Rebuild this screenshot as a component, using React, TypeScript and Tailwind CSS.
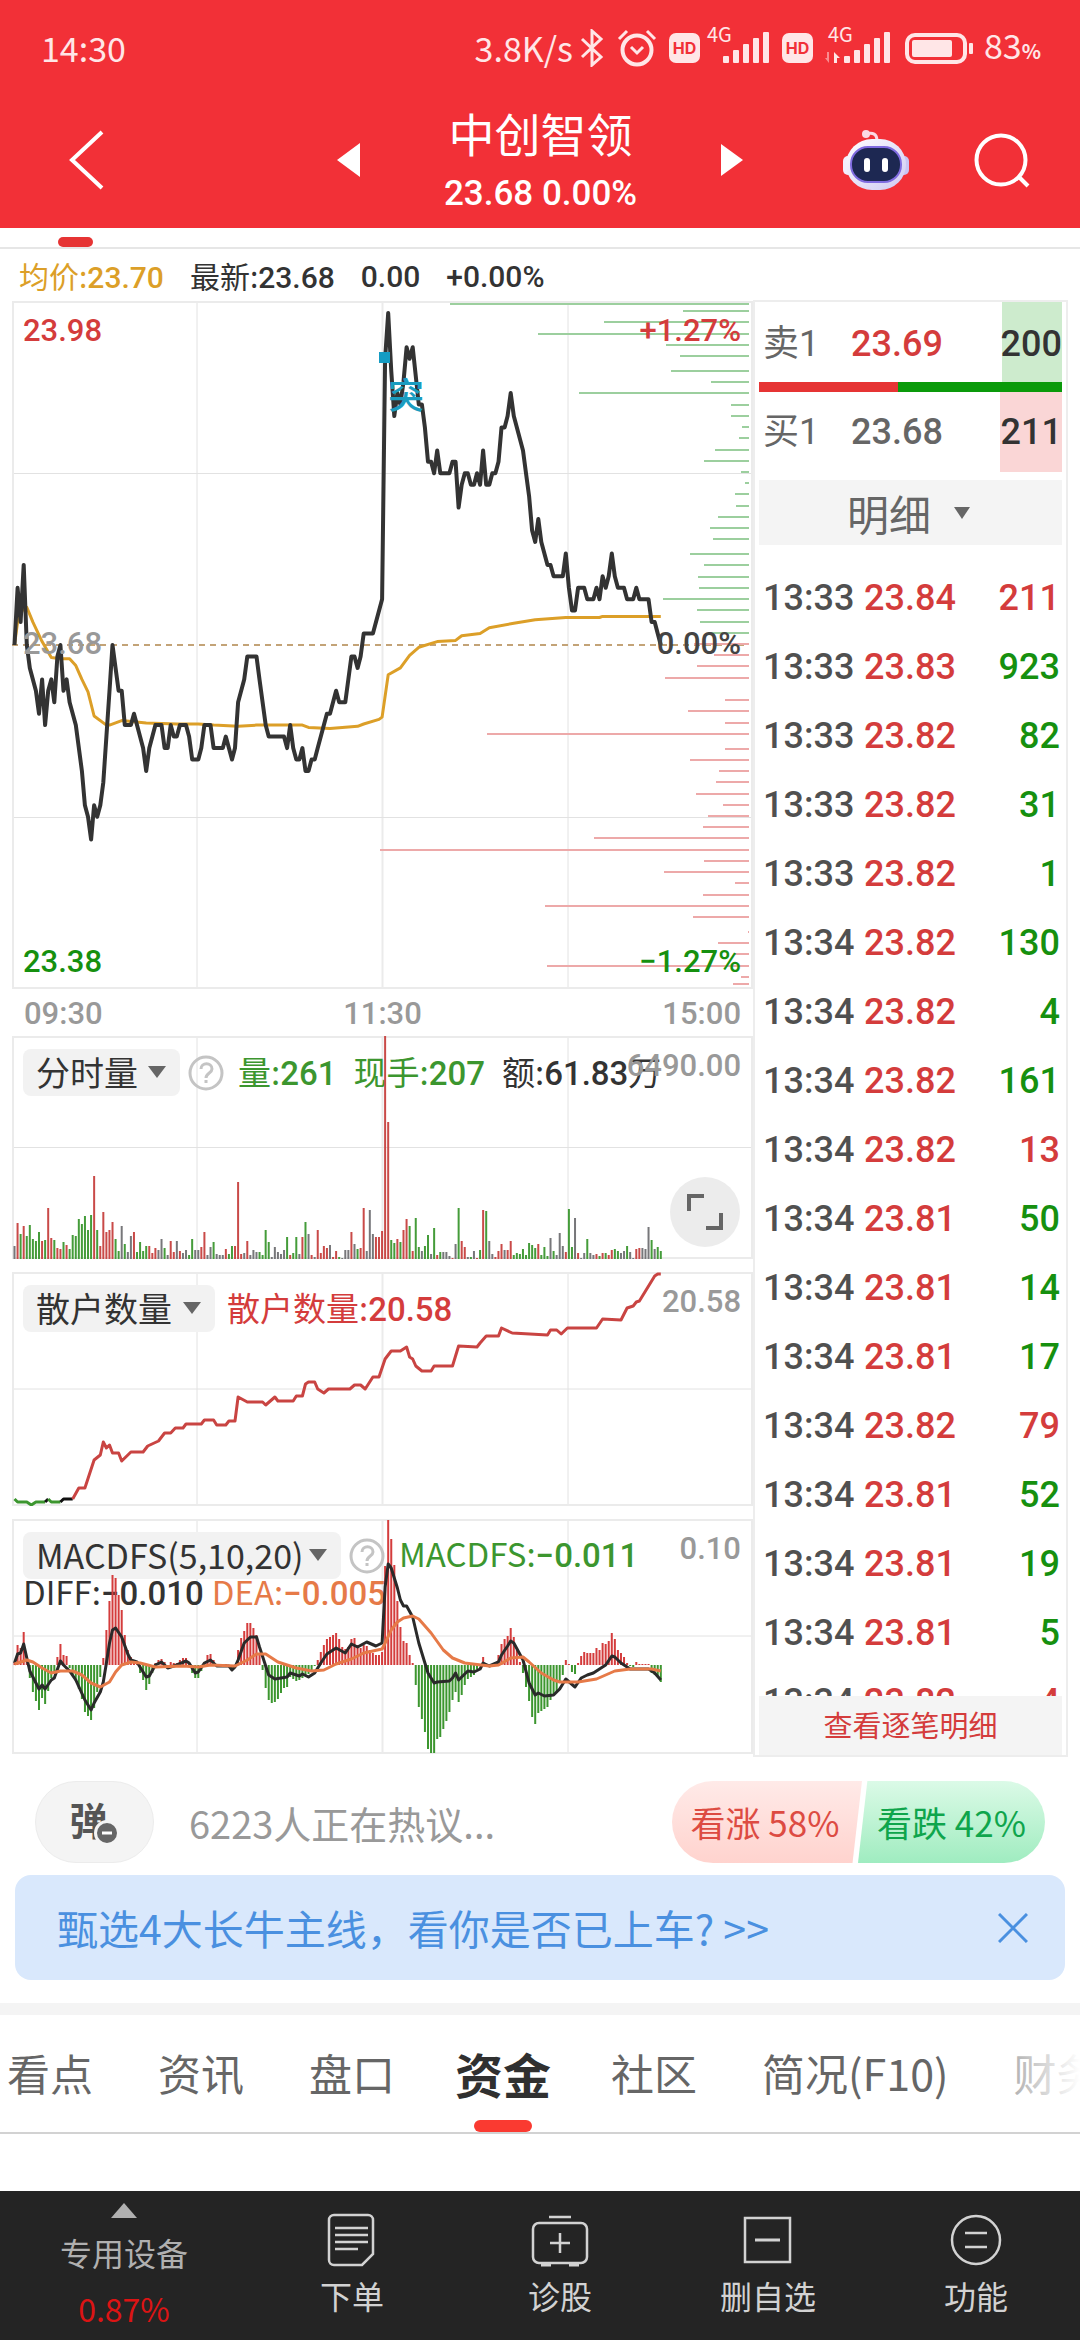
import React from 'react';

type Point = [number, number];

// One slot per trading minute, 240 minutes across the panel
const PANEL_WIDTH = 741;
const minuteX = (minute: number) => 2.5 + minute * 3.063;

const RED = '#d43c3c';
const GREEN = '#3c962f';
const barColors: Record<string, string> = { r: '#c94a48', g: '#459c3a', k: '#77777a' };

const parsePoints = (text: string): Point[] =>
  text.split(' ').map((pair) => pair.split(',').map(Number) as Point);

const toPath = (points: Point[], toY: (value: number) => number = (v) => v) =>
  points.map(([m, v]) => `${minuteX(m).toFixed(1)},${toY(v).toFixed(1)}`).join(' ');

// minute, ticks of 0.01 above yesterday's close
const pricePoints = parsePoints(
  '0,0 1,5 2,2 3,7 4,0 5,-2 7,-4 8,-6 9,-3 10,-7 11,-4 12,-3 13,-5 14,-1 15,0 16,-4 17,-3 18,-5 20,-7 22,-11 23,-14 24,-15 25,-17 26,-14 27,-15 28,-14 29,-12 30,-8 31,-4 32,0 34,-4 35,-4 36,-7 38,-7 39,-6 40,-7 42,-9 43,-11 44,-9 46,-7 48,-7 49,-9 50,-9 51,-7 52,-8 53,-8 54,-7 56,-7 57,-8 58,-10 60,-10 61,-9 62,-7 64,-7 65,-9 68,-9 69,-8 70,-9 71,-10 72,-9 73,-5 75,-3 76,-1 79,-1 80,-3 82,-7 83,-8 88,-8 89,-9 90,-7 91,-9 92,-10 93,-10 94,-9 95,-11 96,-11 97,-10 98,-10 99,-9 102,-6 103,-6 105,-4 106,-5 108,-5 110,-1 111,-1 112,-2 113,-1 114,1 117,1 120,4 121,25 122,29 123,24 124,20 125,22 126,21 127,23 128,26 129,25 130,26 132,21 133,21 134,19 135,16 136,16 137,15 138,17 139,15 142,15 143,16 144,16 145,12 146,14 147,15 148,15 149,14 150,14 151,15 152,14 153,17 154,14 155,14 156,15 157,15 158,16 159,19 160,19 161,20 162,22 163,20 166,17 167,15 168,13 169,10 170,9 171,11 172,9 174,7 175,7 176,6 179,6 180,8 181,5 182,3 183,3 184,5 186,5 187,4 189,4 190,5 191,4 192,6 193,5 194,6 195,8 196,6 197,5 199,5 200,4 202,4 203,5 204,4 207,4 208,2 209,2 210,1 211,0',
);

const averagePoints = parsePoints(
  '0,0 1,2 3,3.3 4,3.3 6,2 9,0.3 12,-1.1 15,-1.2 18,-1.2 20,-1.8 22,-3 24,-4.1 26,-6.2 30,-7 31,-7 35,-6.6 43,-6.8 53,-6.9 60,-6.9 65,-7 73,-7.1 79,-7 94,-7 96,-7.2 103,-7.3 112,-7.1 114,-6.9 119,-6.5 120,-6.3 122,-2.6 126,-2 129,-0.9 132,-0.2 138,0.3 144,0.4 146,0.8 152,1 155,1.5 163,1.9 170,2.2 180,2.4 191,2.4 192,2.5 211,2.5',
);

// y, length
const askDepth = parsePoints(
  '3,299 10,66 21,145 33,211 44,83 55,69 70,78 81,38 92,170 104,18 115,18 126,7 137,10 149,34 160,45 171,8 182,4 193,14 205,13 216,31 227,39 238,36 253,59 264,45 276,51 287,50 298,86 309,52 321,49 332,41',
);
const bidDepth = parsePoints(
  '343,55 354,35 365,52 377,84 399,24 410,61 422,24 433,262 448,24 459,59 470,30 481,33 493,53 504,26 515,41 526,46 537,155 549,369 560,45 571,85 582,14 594,46 605,204 616,56 631,1 642,31 653,15 665,202 676,8 683,16',
);

const volumeBars =
  'k13 r36 g25 r33 g23 g34 g20 g18 g27 r18 g19 r51 r21 g19 r11 r10 g17 r14 g10 g24 g23 g40 g35 g43 g29 g44 r83 g29 r13 r47 r27 r29 r37 g20 g8 k33 g15 k7 k23 r27 g7 g17 g8 g13 r13 r6 r11 k9 k20 g11 k4 r18 r7 k18 r8 k6 k9 g4 g20 k9 k9 r12 r27 k4 k12 g17 k5 k4 k4 r10 g5 g13 r13 r77 r5 k6 r18 k4 k9 k7 g7 g4 g29 g17 k2 k12 k7 k5 k9 g22 r4 g6 g22 k5 r22 g37 k25 r4 k2 r29 r6 r13 r11 k14 r2 r8 g2 k1 k9 k9 r27 k15 g10 r11 r51 k8 k49 k25 r22 r22 r28 r223 r137 g19 g16 r20 g17 r29 r40 g33 r8 g41 g12 k8 g13 g24 k5 g31 r4 g7 k7 k7 k3 r1 k15 g51 r18 r12 k2 g2 k8 r1 g9 r49 g48 k18 k5 r2 r8 r15 k9 r9 r18 g4 g6 g5 g10 g4 g16 g14 g11 r15 g4 g12 g3 k21 g8 k4 k26 k13 r7 g50 g12 k41 r6 k1 k6 g20 k6 k4 r5 g3 r6 g6 r4 r9 g10 g8 k6 k8 g13 k7 k1 r10 r11 k11 k10 k32 g19 k10 g12 g8'
    .split(' ')
    .map((bar) => ({ color: barColors[bar[0]], height: Number(bar.slice(1)) }));

const retailSegments = [
  { color: GREEN, points: '0,227 1,230 4,230 5.5,233 7,230 10,230' },
  { color: '#111111', points: '10,230 11,227' },
  { color: GREEN, points: '11,227 12,230 15,230' },
  { color: '#111111', points: '15,230 16,227 19,227' },
  {
    color: '#c94442',
    points:
      '19,227 21,216 23,216 26,188 28,183 29,170 30,176 31,173 32,181 34,181 35,189 38,180 42,180 43.5,174 47,169 49,161 51,161 52.5,156 55,156 56,152 61,152 62,148 65,148 66,153 69,153 70,149 72,149 73,125 76,130 81,130 82,133 85,125 86,129 91,129 92,124 94,124 95,112 96,110 98,110 99,117 101,121 102.5,117 109.5,117 111,113 113,113 114.5,117 117,105 119,105 121,87 123,79 126,79 128,75 129,85 130,87 131,94 133,99 136,99 137,94 143,94 145,74 151,75 152,71 154,64 158,64 159,56 162.5,61 174,63 175,58 177,58 178.5,62 180.5,56 190,56 192,47 198,48 200,36 202,34 203,30 204,29 209,4 210,2 211,2',
  },
];

const macdBars = [
  3, 20, 17, 33, 3, -13, -27, -36, -45, -33, -39, -26, -13, -6, 8, 21, 10, 9, -3, -10, -16, -24, -34, -47, -51, -55, -43,
  -27, -12, 7, 35, 64, 90, 87, 70, 55, 30, 15, 8, 5, 3, -8, -15, -25, -19, -8, 2, 5, 6, 3, -2, 3, 2, 2, 5, 7, 7, 2, -8,
  -13, -13, -6, 3, 10, 11, 5, -1, -2, -1, 1, -2, -4, -2, 15, 27, 34, 42, 42, 37, 30, 10, -5, -23, -35, -38, -37, -34,
  -28, -23, -22, -12, -14, -16, -15, -13, -11, -9, -7, -1, 5, 13, 20, 26, 28, 30, 32, 26, 18, 16, 18, 26, 27, 20, 17,
  20, 19, 15, 12, 10, 10, 13, 99, 145, 126, 100, 64, 38, 24, 22, 10, 2, -20, -42, -54, -67, -84, -88, -88, -74, -72,
  -64, -56, -47, -35, -27, -37, -30, -20, -14, -12, -10, -4, 1, 8, -1, -2, 1, 2, 10, 21, 26, 29, 37, 28, 15, 3, -8, -22,
  -36, -52, -59, -48, -46, -44, -42, -35, -30, -27, -18, -10, 5, 1, -7, -9, 2, 9, 13, 12, 12, 12, 17, 15, 22, 21, 24,
  32, 26, 15, 12, 8, 2, -1, -2, 3, 1, 1, 1, 1, -8, -10, -12, -17,
];

const diffPoints = parsePoints(
  '0,144 1,135 2,134 3,125 4,139 5,152 8,170 9,166 10,170 12,161 13,159 15,142 16,146 18,152 20,161 23,181 25,191 26,184 28,173 29,163 30,144 31,124 32,111 33,109 35,118 37,135 38,141 40,143 42,153 43,158 44,157 46,146 48,143 50,149 53,146 56,142 57,144 59,154 60,153 62,144 64,141 66,147 70,147 71,151 72,148 73,141 75,124 77,118 79,118 80,128 82,147 83,156 85,160 89,158 90,154 93,157 94,155 96,158 98,154 100,144 102,135 105,129 108,134 110,125 112,128 115,123 118,127 120,124 121,68 122,45 123,49 125,69 126,81 127,87 128,87 130,98 132,124 134,144 135,154 137,164 138,163 142,162 143,159 144,154 145,161 148,152 150,153 152,150 153,144 155,147 158,143 159,136 161,127 162,122 163,124 166,141 168,164 170,176 171,174 173,177 176,176 178,170 180,160 183,168 185,159 187,156 189,154 191,150 193,146 195,137 196,138 198,144 201,150 207,150 209,154 211,161',
);
const deaPoints = parsePoints(
  '0,145 4,141 6,143 9,149 12,154 15,152 19,152 22,156 25,164 28,168 31,163 33,153 35,146 38,143 41,144 46,148 55,147 60,148 64,146 72,147 76,141 79,135 82,135 86,143 92,149 97,152 101,151 105,145 110,140 114,134 120,130 121,124 123,111 125,103 127,99 130,97 132,100 136,114 140,131 143,139 147,144 155,147 158,146 162,139 166,138 168,143 172,154 176,161 178,163 184,163 190,160 196,152 201,150 208,150 211,152',
);

const trades = [
  ['13:33', '23.84', '211', 'r'],
  ['13:33', '23.83', '923', 'g'],
  ['13:33', '23.82', '82', 'g'],
  ['13:33', '23.82', '31', 'g'],
  ['13:33', '23.82', '1', 'g'],
  ['13:34', '23.82', '130', 'g'],
  ['13:34', '23.82', '4', 'g'],
  ['13:34', '23.82', '161', 'g'],
  ['13:34', '23.82', '13', 'r'],
  ['13:34', '23.81', '50', 'g'],
  ['13:34', '23.81', '14', 'g'],
  ['13:34', '23.81', '17', 'g'],
  ['13:34', '23.82', '79', 'r'],
  ['13:34', '23.81', '52', 'g'],
  ['13:34', '23.81', '19', 'g'],
  ['13:34', '23.81', '5', 'g'],
  ['13:34', '23.82', '4', 'r'],
];

const tabs = ['看点', '资讯', '盘口', '资金', '社区', '简况(F10)', '财务'];

const HdBadge = () => (
  <svg width="31" height="30" viewBox="0 0 31 30" aria-label="HD">
    <rect width="31" height="30" rx="7" fill="#ffe6e7" />
    <text x="15.5" y="21" textAnchor="middle" fontSize="16" fontWeight="700" fontFamily="Inter, sans-serif" fill="#f13038">
      HD
    </text>
  </svg>
);

const SignalBars = ({ data }: { data?: boolean }) => (
  <svg className="overflow-visible" width="66" height="38" viewBox="0 0 66 38" fill="#ffe6e7">
    <text x="3" y="17" fontSize="20" fontFamily="'Noto Sans CJK SC', sans-serif">
      4G
    </text>
    {[7, 13, 19, 25, 31].map((h, i) => (
      <rect key={h} x={19 + i * 10} y={38 - h} width="6" height={h} rx="1" />
    ))}
    {data && (
      <>
        <path d="M4 27v11L0 33h2v-6z" opacity=".5" />
        <path d="M9 38V27l6 6h-3v5z" />
      </>
    )}
  </svg>
);

const StatusBar = () => (
  <div className="flex h-24 items-center justify-between pl-[41px] pr-[39px] font-['Noto_Sans_CJK_SC',sans-serif] text-[34px] leading-10 text-[#ffe6e7]">
    <span>14:30</span>
    <div className="flex items-center">
      <span>3.8K/s</span>
      <svg className="ml-1.5" width="26" height="38" viewBox="0 0 26 38" fill="none" stroke="#ffe6e7" strokeWidth="3">
        <path d="M3 10 22 28 13 36V2l9 8L3 28" />
      </svg>
      <svg className="ml-3" width="40" height="38" viewBox="0 0 40 38" fill="none" stroke="#ffe6e7" strokeWidth="4">
        <circle cx="20" cy="21" r="14.5" />
        <path d="M14 18l6 6 6-6" strokeWidth="3" />
        <path d="M2 10l8-8M38 10l-8-8" strokeWidth="3" />
      </svg>
      <div className="ml-3 flex items-center">
        <HdBadge />
        <div className="ml-1 mb-2">
          <SignalBars />
        </div>
      </div>
      <div className="ml-3 flex items-center">
        <HdBadge />
        <div className="ml-3 mb-2">
          <SignalBars data />
        </div>
      </div>
      <svg className="ml-3.5" width="69" height="31" viewBox="0 0 69 31" fill="none">
        <rect x="2" y="2" width="58" height="27" rx="8" stroke="#ffe6e7" strokeWidth="4" />
        <rect x="7" y="7" width="40" height="17" rx="2" fill="#ffe6e7" />
        <rect x="64" y="10" width="4" height="11" rx="1" fill="#ffe6e7" />
      </svg>
      <span className="ml-2.5">
        83<span className="text-[20px] font-bold">%</span>
      </span>
    </div>
  </div>
);

const RobotIcon = () => (
  <svg width="68" height="62" viewBox="0 0 68 62">
    <defs>
      <linearGradient id="shell" x1="0" y1="0" x2="1" y2="1">
        <stop offset="0" stopColor="#ffffff" />
        <stop offset="1" stopColor="#cfc9f3" />
      </linearGradient>
    </defs>
    <path d="M24 5c7-2 11 0 11 7" fill="none" stroke="#fbd9e4" strokeWidth="3" />
    <circle cx="24" cy="5" r="4" fill="#fbd9e4" />
    <rect x="1" y="27" width="10" height="19" rx="5" fill="#f3effd" />
    <rect x="57" y="27" width="10" height="19" rx="5" fill="#c9c4f4" />
    <rect x="4" y="10" width="60" height="51" rx="26" fill="url(#shell)" />
    <rect x="9" y="18" width="50" height="35" rx="17" fill="#1d2852" stroke="#7f6be0" strokeWidth="2" />
    <rect x="22" y="29" width="6" height="14" rx="3" fill="#fff" />
    <rect x="40" y="29" width="6" height="14" rx="3" fill="#fff" />
  </svg>
);

const Header = () => (
  <header className="h-[228px] bg-[#f23037] text-white">
    <StatusBar />
    <div className="grid h-32 grid-cols-[1fr_auto_1fr] items-center">
      <button aria-label="返回" className="ml-[68px] justify-self-start">
        <svg width="38" height="64" viewBox="0 0 38 64" fill="none" stroke="#fff" strokeWidth="4">
          <path d="M34 4 4 32l30 28" />
        </svg>
      </button>
      <div className="flex items-center gap-[84px]">
        <button aria-label="上一只">
          <svg width="23" height="34" viewBox="0 0 23 34" fill="#fff">
            <path d="M23 0v34L0 17z" />
          </svg>
        </button>
        <div className="text-center">
          <h1 className="font-['Noto_Sans_CJK_SC',sans-serif] text-[46px] leading-[68px]">中创智领</h1>
          <p className="text-[35px] leading-[56px] font-medium">23.68 0.00%</p>
        </div>
        <button aria-label="下一只">
          <svg width="22" height="32" viewBox="0 0 22 32" fill="#fff">
            <path d="M0 0v32l22-16z" />
          </svg>
        </button>
      </div>
      <div className="mr-[50px] flex items-center gap-16 justify-self-end">
        <button aria-label="智能助手">
          <RobotIcon />
        </button>
        <button aria-label="搜索">
          <svg width="56" height="56" viewBox="0 0 56 56" fill="none" stroke="#fff" strokeWidth="4">
            <circle cx="27" cy="28" r="24.5" />
            <path d="M44 44l10 10" />
          </svg>
        </button>
      </div>
    </div>
  </header>
);

const GridLines = ({ height, rows }: { height: number; rows: number[] }) => (
  <g stroke="#e2e2e2" strokeWidth="1">
    <path d={`M185 0V${height}M556 0V${height}`} />
    <path d={`M370.5 0V${height}`} stroke="#ebebeb" strokeWidth="2" />
    {rows.map((y) => (
      <path key={y} d={`M0 ${y}H${PANEL_WIDTH}`} />
    ))}
    <rect x="1" y="1" width={PANEL_WIDTH - 2} height={height - 2} fill="none" stroke="#ebebeb" strokeWidth="2" />
  </g>
);

const Caret = () => (
  <svg
    className="pointer-events-none absolute right-3.5 top-[17px]"
    width="18"
    height="12"
    viewBox="0 0 18 12"
    fill="#666"
  >
    <path d="M0 0h18L9 12z" />
  </svg>
);

const IndicatorSelect = ({ label, width }: { label: string; width: string }) => (
  <div className={`relative ${width}`}>
    <select
      aria-label="指标"
      className="block h-[47px] w-full appearance-none rounded-lg bg-[#f2f2f2] pb-0.5 pl-[13px] font-['Noto_Sans_CJK_SC',sans-serif] text-[34px] leading-[45px] font-normal text-[#333]"
    >
      <option>{label}</option>
    </select>
    <Caret />
  </div>
);

const Reading = ({ label, value, unit }: { label: string; value: string; unit?: string }) => (
  <span className="whitespace-nowrap">
    <span className="font-['Noto_Sans_CJK_SC',sans-serif] font-normal">{label}:</span>
    <span className="font-medium">{value}</span>
    {unit}
  </span>
);

const HelpButton = () => (
  <button aria-label="说明">
    <svg width="36" height="36" viewBox="0 0 36 36" fill="none" stroke="#c4c4c4" strokeWidth="3">
      <circle cx="18" cy="18" r="16" />
      <path d="M13 14c0-7 11-7 11 0 0 4-6 4-6 9M18 25v3" />
    </svg>
  </button>
);

const PriceChart = () => {
  const toY = (ticks: number) => 344 - ticks * 11.45;
  return (
    <div className="relative text-[31px] leading-8 font-medium">
      <svg className="block h-[688px] w-full" viewBox="0 0 741 688" preserveAspectRatio="none" fill="none">
        <GridLines height={688} rows={[172.5, 516.5]} />
        <path d="M0 344H737" stroke="#c3a377" strokeWidth="2" strokeDasharray="6 5" />
        <g strokeWidth="2">
          {askDepth.map(([y, w]) => (
            <path key={y} d={`M${737 - w} ${y}H737`} stroke="#9ccf9e" />
          ))}
          {bidDepth.map(([y, w]) => (
            <path key={y} d={`M${737 - w} ${y}H737`} stroke="#eda9a9" />
          ))}
        </g>
        <polyline points={toPath(averagePoints, toY)} stroke="#dc9f28" strokeWidth="3" strokeLinejoin="round" />
        <polyline points={toPath(pricePoints, toY)} stroke="#333" strokeWidth="4" strokeLinejoin="round" />
        <rect x="367" y="51" width="11" height="11" fill="#159cc3" />
      </svg>
      <span className="absolute left-[11px] top-[14px] text-[#d43c3c]">23.98</span>
      <span className="absolute left-[11px] top-[327px] text-[#999]">23.68</span>
      <span className="absolute left-[11px] bottom-[11px] text-[#16900f]">23.38</span>
      <span className="absolute right-[12px] top-[14px] text-[#d43c3c]">+1.27%</span>
      <span className="absolute right-[12px] top-[327px] text-[#444]">0.00%</span>
      <span className="absolute right-[12px] bottom-[11px] text-[#16900f]">−1.27%</span>
      <span className="absolute left-[376px] top-[80px] text-[36px] font-medium text-[#1a9cc0]">突</span>
    </div>
  );
};

const VolumeChart = () => (
  <div className="relative">
    <svg className="block h-[223px] w-full" viewBox="0 0 741 223" preserveAspectRatio="none">
      <GridLines height={223} rows={[111.5]} />
    </svg>
    <div className="absolute left-[11px] top-3 flex items-center text-[33px] leading-[47px]">
      <IndicatorSelect label="分时量" width="w-[157px]" />
      <div className="ml-2 mr-3.5 flex">
        <HelpButton />
      </div>
      <div className="flex gap-[17px] text-[#3c962f]">
        <Reading label="量" value="261" />
        <Reading label="现手" value="207" />
        <div className="text-[#333]">
          <Reading label="额" value="61.83" unit="万" />
        </div>
      </div>
    </div>
    <span className="absolute right-[12px] top-3 text-[31px] leading-9 font-medium text-[#999]">6490.00</span>
    <svg
      className="pointer-events-none absolute inset-0 h-[223px] w-full"
      viewBox="0 0 741 223"
      preserveAspectRatio="none"
    >
      {volumeBars.map(({ color, height }, i) => (
        <rect key={i} x={minuteX(i) - 1} y={223 - height} width="2" height={height} fill={color} />
      ))}
    </svg>
    <button
      aria-label="全屏"
      className="absolute bottom-3 right-[13px] flex size-[70px] items-center justify-center rounded-full bg-[#ececec]"
    >
      <svg width="36" height="36" viewBox="0 0 36 36" fill="none" stroke="#666" strokeWidth="4">
        <path d="M2 17V2h15M34 19v15H19" />
      </svg>
    </button>
  </div>
);

const RetailChart = () => (
  <div className="relative">
    <svg className="block h-[234px] w-full" viewBox="0 0 741 234" preserveAspectRatio="none" fill="none">
      <GridLines height={234} rows={[117]} />
      {retailSegments.map(({ color, points }) => (
        <polyline
          key={points}
          points={toPath(parsePoints(points))}
          stroke={color}
          strokeWidth="3"
          strokeLinejoin="round"
        />
      ))}
    </svg>
    <div className="absolute left-[11px] top-3 flex items-center gap-3 text-[33px] leading-[47px] text-[#d43c3c]">
      <IndicatorSelect label="散户数量" width="w-[192px]" />
      <Reading label="散户数量" value="20.58" />
    </div>
    <span className="absolute right-[12px] top-3 text-[31px] leading-9 font-medium text-[#999]">20.58</span>
  </div>
);

const MacdChart = () => {
  const zero = 146;
  return (
    <div className="relative">
      <svg className="block h-[235px] w-full" viewBox="0 0 741 235" preserveAspectRatio="none">
        <GridLines height={235} rows={[117]} />
      </svg>
      <div className="absolute left-[11px] top-3 flex items-center text-[33px] leading-[45px]">
        <IndicatorSelect label="MACDFS(5,10,20)" width="w-[318px]" />
        <div className="ml-2 mr-3.5 flex">
          <HelpButton />
        </div>
        <div className="pb-0.5 text-[#3c962f]">
          <Reading label="MACDFS" value="−0.011" />
        </div>
      </div>
      <div className="absolute left-[11px] top-[54px] flex gap-2 text-[33px] leading-9">
        <div className="text-[#333]">
          <Reading label="DIFF" value="−0.010" />
        </div>
        <div className="text-[#e67a48]">
          <Reading label="DEA" value="−0.005" />
        </div>
      </div>
      <span className="absolute right-[12px] top-3 text-[31px] leading-9 font-medium text-[#999]">0.10</span>
      <svg
        className="pointer-events-none absolute inset-0 h-[235px] w-full"
        viewBox="0 0 741 235"
        preserveAspectRatio="none"
        fill="none"
      >
        {macdBars.map((v, i) => (
          <rect
            key={i}
            x={minuteX(i) - 1}
            y={v > 0 ? zero - v : zero}
            width="2"
            height={Math.abs(v)}
            fill={v > 0 ? RED : GREEN}
          />
        ))}
        <polyline points={toPath(diffPoints)} stroke="#2a2a2a" strokeWidth="3" strokeLinejoin="round" />
        <polyline points={toPath(deaPoints)} stroke="#e67a48" strokeWidth="3" strokeLinejoin="round" />
      </svg>
    </div>
  );
};

const OrderPanel = () => (
  <aside className="w-[315px] shrink-0 border-2 border-[#ededed] px-1 text-[36px] leading-10 font-medium">
    <div className="flex h-[80px] items-center pl-1">
      <span className="w-[88px] pt-1 font-normal text-[#666]">卖1</span>
      <span className="pt-1 text-[#d43c3c]">23.69</span>
      <span className="ml-auto flex h-full w-[60px] items-center justify-end bg-[#cdebcd] pt-1 text-[#333]">200</span>
    </div>
    <div className="flex h-2.5">
      <div className="w-[46%] bg-[#e63434]" />
      <div className="grow bg-[#0a9a0a]" />
    </div>
    <div className="flex h-[80px] items-center pl-1">
      <span className="w-[88px] font-normal text-[#666]">买1</span>
      <span className="text-[#666]">23.68</span>
      <span className="ml-auto flex h-full w-[62px] items-center justify-end bg-[#fad6d6] text-[#333]">211</span>
    </div>
    <div className="relative mt-2 bg-[#f4f4f4]">
      <select
        aria-label="成交类型"
        className="block h-[65px] w-full appearance-none pl-[88px] font-['Noto_Sans_CJK_SC',sans-serif] text-[42px] leading-[65px] font-normal text-[#666]"
      >
        <option>明细</option>
      </select>
      <svg
        className="pointer-events-none absolute right-[92px] top-[27px]"
        width="16"
        height="12"
        viewBox="0 0 16 12"
        fill="#666"
      >
        <path d="M0 0h16L8 12z" />
      </svg>
    </div>
    <div className="mt-[18px] h-[1133px] overflow-hidden">
      <table className="w-full">
        <tbody>
          {trades.map(([time, price, volume, side], i) => (
            <tr key={i} className="h-[69px]">
              <td className="w-[105px] p-0 pl-1 text-[#505050]">{time}</td>
              <td className="p-0 text-[#d43c3c]">{price}</td>
              <td className={`p-0 pr-0.5 text-right ${side === 'r' ? 'text-[#d43c3c]' : 'text-[#16900f]'}`}>
                {volume}
              </td>
            </tr>
          ))}
        </tbody>
      </table>
    </div>
    <button className="block h-[59px] w-full bg-[#f4f4f4] pt-0.5 text-[29px] font-normal text-[#d43c3c]">
      查看逐笔明细
    </button>
  </aside>
);

const CommentBar = () => (
  <div className="flex h-[82px] items-center pl-[35px] pr-[35px] font-['Noto_Sans_CJK_SC',sans-serif]">
    <button
      aria-label="弹幕"
      className="relative flex h-full w-[119px] items-center justify-center rounded-full border border-[#ececec] bg-[#f4f4f4] pr-3 pb-2 text-[38px] font-bold text-[#555]"
    >
      弹
      <svg className="absolute left-[58px] top-[38px]" width="26" height="26" viewBox="0 0 26 26">
        <circle cx="13" cy="13" r="11.5" fill="#666" stroke="#f4f4f4" strokeWidth="3" />
        <path d="M8 13h10" stroke="#fff" strokeWidth="3" />
      </svg>
    </button>
    <input
      aria-label="评论"
      placeholder="6223人正在热议..."
      className="ml-[35px] min-w-0 grow text-[38px] outline-none placeholder:text-[#999]"
    />
    <div className="flex h-full w-[373px] text-[35px]">
      <button className="-mr-1 w-[190px] rounded-l-full bg-linear-to-b from-[#ffeae8] to-[#ffd3ce] pr-4 pl-3 whitespace-nowrap text-[#dd4b42] [clip-path:polygon(0_0,100%_0,95%_100%,0_100%)]">
        看涨 58%
      </button>
      <button className="grow rounded-r-full bg-linear-to-b from-[#dbfae7] to-[#9fecc0] whitespace-nowrap text-[#0fa54c] [clip-path:polygon(5%_0,100%_0,100%_100%,0_100%)]">
        看跌 42%
      </button>
    </div>
  </div>
);

const Banner = () => (
  <div className="mx-[15px] mt-3 flex h-[105px] items-center justify-between rounded-2xl bg-[#d9e8fc] pl-[42px] pr-[37px]">
    <a href="#picks" className="font-['Noto_Sans_CJK_SC',sans-serif] text-[41px] text-[#4a90e0]">
      甄选4大长牛主线，看你是否已上车? &gt;&gt;
    </a>
    <button aria-label="关闭">
      <svg width="30" height="30" viewBox="0 0 30 30" fill="none" stroke="#4a90e0" strokeWidth="3">
        <path d="M1 1l28 28M29 1L1 29" />
      </svg>
    </button>
  </div>
);

const Tabs = () => (
  <nav className="relative mt-[23px] overflow-hidden border-t-12 border-b-2 border-t-[#f4f4f4] border-b-[#d2d2d2]">
    <div className="flex h-[117px] gap-[65px] pl-[7px] font-['Noto_Sans_CJK_SC',sans-serif] text-[43px] whitespace-nowrap">
      {tabs.map((tab) =>
        tab === '资金' ? (
          <button
            key={tab}
            className="flex w-[86px] shrink-0 flex-col items-center justify-between pt-[25px] text-[48px] leading-[66px] font-bold text-[#303030]"
          >
            {tab}
            <span className="h-3 w-[58px] rounded-full bg-[#fa3a31]" />
          </button>
        ) : (
          <button key={tab} className="shrink-0 pb-0.5 text-[#666]">
            {tab}
          </button>
        ),
      )}
    </div>
    <div className="absolute inset-y-0 right-0 w-20 bg-linear-to-r from-white/40 to-white" />
  </nav>
);

const navItems = [
  {
    label: '下单',
    icon: (
      <>
        <path d="M10 4h34a5 5 0 0 1 5 5v34L38 54H10a5 5 0 0 1-5-5V9a5 5 0 0 1 5-5z" />
        <path d="M11 17h33M11 24h33M11 31h33M11 38h23" />
      </>
    ),
  },
  {
    label: '诊股',
    icon: (
      <>
        <rect x="1" y="12" width="54" height="40" rx="6" />
        <path d="M17 6h22M28 22v20M18 32h20" />
        <path d="M9 54h10M37 54h10" strokeWidth="3" />
      </>
    ),
  },
  {
    label: '删自选',
    icon: (
      <>
        <rect x="5" y="7" width="45" height="44" />
        <path d="M15 29h25" strokeWidth="3" />
      </>
    ),
  },
  {
    label: '功能',
    icon: (
      <>
        <circle cx="28" cy="29" r="24" />
        <path d="M17 22h22M17 36h22" />
      </>
    ),
  },
];

const BottomNav = () => (
  <footer className="mt-[57px] flex h-[149px] bg-[#242424] font-['Noto_Sans_CJK_SC',sans-serif] text-[32px] leading-10 text-[#d2d2d2]">
    <button className="flex w-[248px] flex-col items-center pt-3">
      <svg width="26" height="15" viewBox="0 0 26 15" fill="#b0b0b0">
        <path d="M13 0l13 15H0z" />
      </svg>
      <span className="mt-3.5 text-[#b0b0b0]">专用设备</span>
      <span className="mt-4 text-[#dc1414]">0.87%</span>
    </button>
    {navItems.map(({ label, icon }) => (
      <button key={label} className="flex grow basis-0 flex-col items-center pt-5">
        <svg
          className="overflow-visible"
          width="56"
          height="58"
          viewBox="0 0 56 58"
          fill="none"
          stroke="#d2d2d2"
          strokeWidth="2.5"
        >
          {icon}
        </svg>
        <span className="mt-1.5">{label}</span>
      </button>
    ))}
  </footer>
);

const App: React.FC = () => {
  return (
    <div className="min-h-screen bg-white font-['Roboto','Noto_Sans_CJK_SC',sans-serif]">
      <Header />
      <div className="flex h-[21px] items-end border-b-2 border-[#e6e6e6] pl-[58px]">
        <span className="h-2.5 w-[35px] rounded-full bg-[#e63434]" />
      </div>
      <div className="flex h-[51px] items-center gap-[26px] pl-[19px] pt-1 text-[30px] leading-[47px] text-[#333]">
        <div className="text-[#dc9f28]">
          <Reading label="均价" value="23.70" />
        </div>
        <Reading label="最新" value="23.68" />
        <span className="font-medium">0.00</span>
        <span className="font-medium">+0.00%</span>
      </div>
      <main className="flex pr-3 pl-3">
        <div className="min-w-0 grow pt-[1px]">
          <PriceChart />
          <div className="flex h-[47px] items-center justify-between px-3 pt-1 text-[31px] font-medium text-[#999]">
            <span>09:30</span>
            <span>11:30</span>
            <span>15:00</span>
          </div>
          <VolumeChart />
          <div className="mt-[13px]">
            <RetailChart />
          </div>
          <div className="mt-[13px]">
            <MacdChart />
          </div>
        </div>
        <OrderPanel />
      </main>
      <div className="mt-6">
        <CommentBar />
      </div>
      <Banner />
      <Tabs />
      <BottomNav />
    </div>
  );
};

export default App;
